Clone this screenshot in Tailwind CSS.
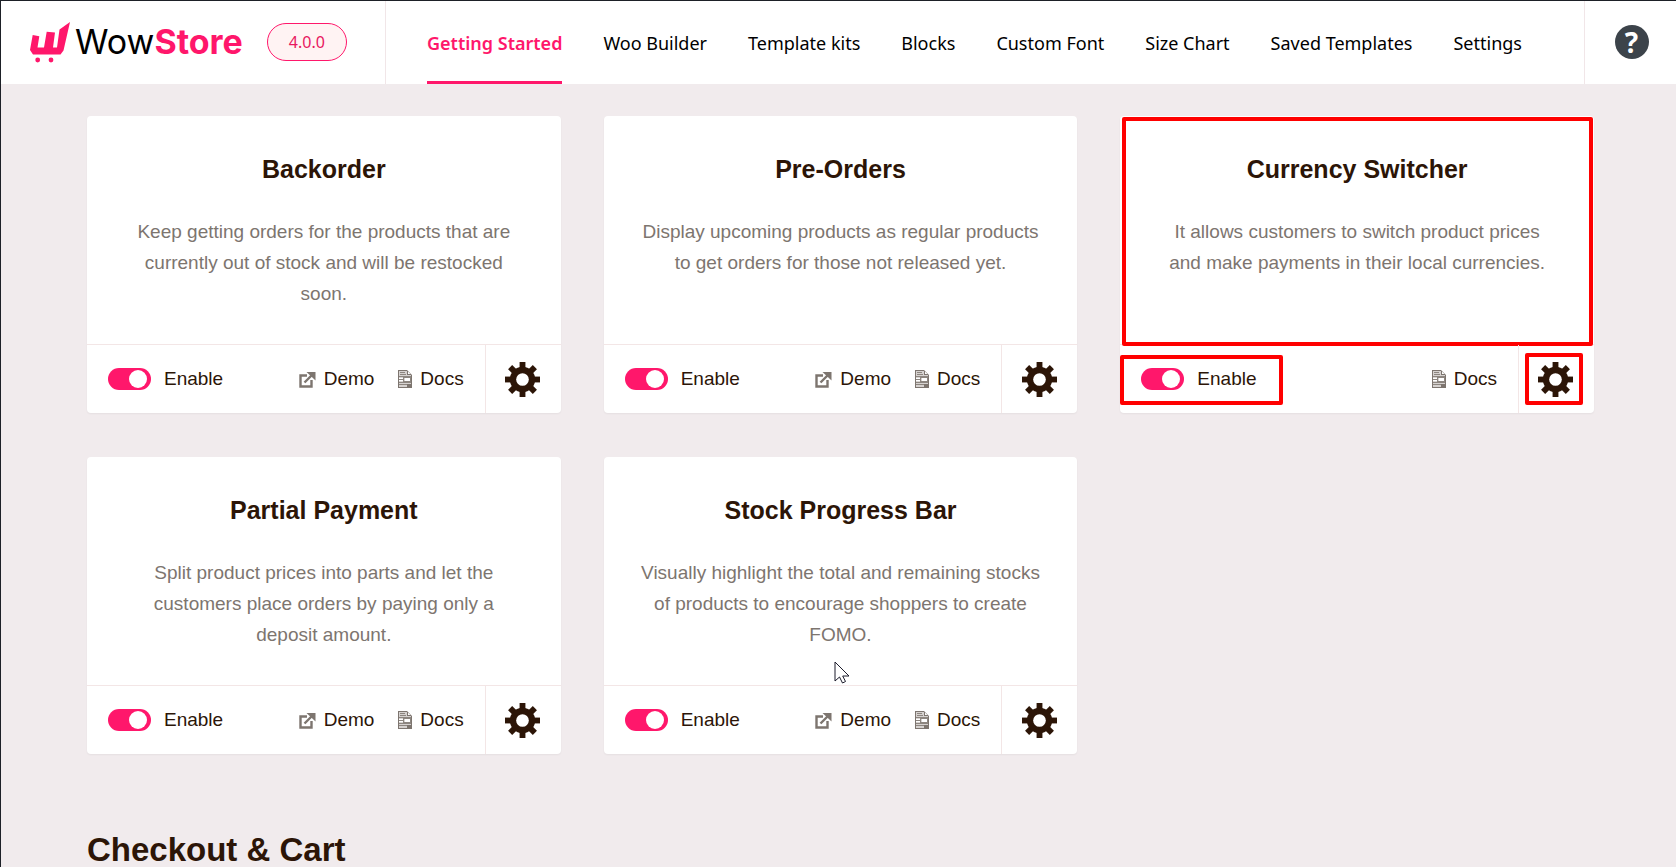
<!DOCTYPE html>
<html lang="en">
<head>
  <meta charset="UTF-8" />
  <meta name="viewport" content="width=device-width, initial-scale=1.0"/>
  <title>WowStore</title>
  <script src="https://cdn.jsdelivr.net/npm/@tailwindcss/browser@4"></script>
</head>
<body class="min-h-screen overflow-hidden border-l border-t border-[#1d2027] bg-[#f1ebed] font-['Liberation_Sans',Arial,sans-serif] text-[#2c1507]">

  <!-- Shared icons -->
  <svg class="hidden">
    <symbol id="gear" viewBox="0 0 36 36">
      <g fill="#2c1507">
        <g id="teeth">
          <rect x="15" y="0" width="6" height="36"/>
          <rect x="0" y="15" width="36" height="6"/>
        </g>
        <use href="#teeth" transform="rotate(45 18 18)"/>
        <circle cx="18" cy="18" r="13"/>
      </g>
      <circle cx="18" cy="18" r="6.5" fill="#fff"/>
    </symbol>
    <symbol id="external" viewBox="0 0 17 17">
      <path d="M8 4.500H1.500v11h11V9" fill="none" stroke="#7d756f" stroke-width="2.4"/>
      <path d="M5.500 11.500 12.500 4.500" stroke="#7d756f" stroke-width="2.4"/>
      <path d="M7.500 1H16.500V9.500z" fill="#7d756f"/>
    </symbol>
    <symbol id="doc" viewBox="0 0 14 18">
      <path d="M0 0h9l5 5v13H0z" fill="#7d756f"/>
      <path d="M1 1h8v4h4v12H1z" fill="#d6d2d0"/>
      <path d="M10 1.500V4h2.500z" fill="#fff"/>
      <path d="M2 2.500h5M2 4.500h6M1 6.500h12M1 12.500h12M1 14.500h12" stroke="#8d8680"/>
      <path d="M1 8h4v3H1zM7 8h5v3H7z" fill="#fff"/>
      <path d="M1 9.500h5M5.500 7v5M12.500 7v5M5.500 11.500h7M5.500 7.500h7" stroke="#8d8680"/>
      <path d="M9 14h4v3H9z" fill="#7d756f"/>
    </symbol>
  </svg>

  <header class="flex h-[83px] items-stretch bg-white">
    <div class="flex w-[385px] shrink-0 items-center border-r border-[#f1e6e8] pb-px pl-7">
      <a href="#" class="flex items-center gap-1" aria-label="WowStore">
        <svg class="h-[42px] w-[42px] shrink-0" viewBox="0 0 42 42" fill="#ff176b">
          <path d="M3.700 14 10.300 15.300 8.500 26.500H15L17.700 10.700 26 11.500 24 26.500H28L30.500 8.500 41 1 34.500 29.500 31.500 33.500H4L1 29z"/>
          <circle cx="8.700" cy="39" r="2.400"/>
          <circle cx="22" cy="39" r="2.400"/>
        </svg>
        <span class="font-[Inter,sans-serif] text-[34px] leading-10 text-black">Wow<b class="font-bold text-[#ff176b]">Store</b></span>
      </a>
      <span class="ml-6 flex h-[38px] w-20 items-center justify-center rounded-full border border-[#ff176b] bg-[#fff3f3] font-['Noto_Sans',sans-serif] text-base text-[#e8175f]">4.0.0</span>
    </div>
    <nav class="flex flex-1 items-stretch gap-[41px] pl-[41px] font-['Noto_Sans',sans-serif] text-[18px] whitespace-nowrap text-black">
      <a href="#" class="flex items-center border-b-3 border-[#ff176b] pt-[5px] font-semibold text-[#ff176b]">Getting Started</a>
      <a href="#" class="flex items-center pt-0.5">Woo Builder</a>
      <a href="#" class="flex items-center pt-0.5">Template kits</a>
      <a href="#" class="flex items-center pt-0.5">Blocks</a>
      <a href="#" class="flex items-center pt-0.5">Custom Font</a>
      <a href="#" class="flex items-center pt-0.5">Size Chart</a>
      <a href="#" class="flex items-center pt-0.5">Saved Templates</a>
      <a href="#" class="flex items-center pt-0.5">Settings</a>
    </nav>
    <div class="flex w-[92px] shrink-0 items-center justify-center border-l border-[#f1e6e8] pb-0.5 pl-0.5">
      <button type="button" aria-label="Help" class="flex size-[34px] items-center justify-center rounded-full bg-[#3c434a] font-['Noto_Sans',sans-serif] text-[28px] leading-none font-bold text-white">?</button>
    </div>
  </header>

  <main class="pt-8 pr-[82px] pl-[86px]">
    <div id="addons" class="grid grid-cols-3 gap-x-[43px] gap-y-11"></div>
    <h2 class="mt-[76px] text-[33px] leading-10 font-bold">Checkout &amp; Cart</h2>
  </main>

  <script>
    const addons = [
      { title: "Backorder", text: "Keep getting orders for the products that are currently out of stock and will be restocked soon.", demo: true },
      { title: "Pre-Orders", text: "Display upcoming products as regular products to get orders for those not released yet.", demo: true },
      { title: "Currency Switcher", text: "It allows customers to switch product prices and make payments in their local currencies.", marked: true },
      { title: "Partial Payment", text: "Split product prices into parts and let the customers place orders by paying only a deposit amount.", demo: true },
      { title: "Stock Progress Bar", text: "Visually highlight the total and remaining stocks of products to encourage shoppers to create FOMO.", demo: true, cursor: true }
    ];

    const cursor = `
      <svg class="absolute bottom-0 left-[230px] h-6 w-4" viewBox="0 0 16 24">
        <path d="M1 1v19l4.500-4 3 6 3-1.500-2.800-5.500H15z" fill="#fff" stroke="#1b1b2b"/>
      </svg>`;

    document.getElementById("addons").innerHTML = addons.map((a, i) => `
      <article class="flex flex-col rounded bg-white shadow-xs">
        <div class="relative min-h-[228px] flex-1 px-9 pt-[37px] text-center">
          <h3 class="text-[25px] leading-8 font-bold">${a.title}</h3>
          <p class="mt-[31px] text-[19px] leading-[31px] text-[#7d756f]">${a.text}</p>
          ${a.marked ? '<span class="absolute top-px right-px -bottom-0.5 left-0.5 rounded-xs border-4 border-[#ff0000]"></span>' : ""}
          ${a.cursor ? cursor : ""}
        </div>
        <div class="flex h-[69px] border-t border-[#f3e6e6] text-[19px]">
          <div class="flex flex-1 items-center justify-between px-[21px]">
            <label class="relative flex items-center gap-[13px]" for="addon${i}">
              <input id="addon${i}" type="checkbox" checked class="h-[22px] w-[43px] appearance-none rounded-full bg-[#ff176b] py-0.5 pr-1 before:ml-auto before:block before:size-[18px] before:rounded-full before:bg-white" />
              Enable
              ${a.marked ? '<span class="absolute -top-2.5 -right-[26px] -bottom-3 -left-[21px] rounded-xs border-4 border-[#ff0000]"></span>' : ""}
            </label>
            <div class="flex items-center gap-6">
              ${a.demo ? '<a href="#" class="flex items-center gap-2"><svg class="size-[17px]"><use href="#external"/></svg>Demo</a>' : ""}
              <a href="#" class="flex items-center gap-2"><svg class="h-[18px] w-3.5"><use href="#doc"/></svg>Docs</a>
            </div>
          </div>
          <button type="button" aria-label="Settings" class="relative flex w-[76px] items-center justify-center border-l border-[#f3e6e6] pr-px">
            <svg class="size-[35px]"><use href="#gear"/></svg>
            ${a.marked ? '<span class="absolute top-2 right-[11px] bottom-2 left-1.5 rounded-xs border-4 border-[#ff0000]"></span>' : ""}
          </button>
        </div>
      </article>`).join("");
  </script>
</body>
</html>
